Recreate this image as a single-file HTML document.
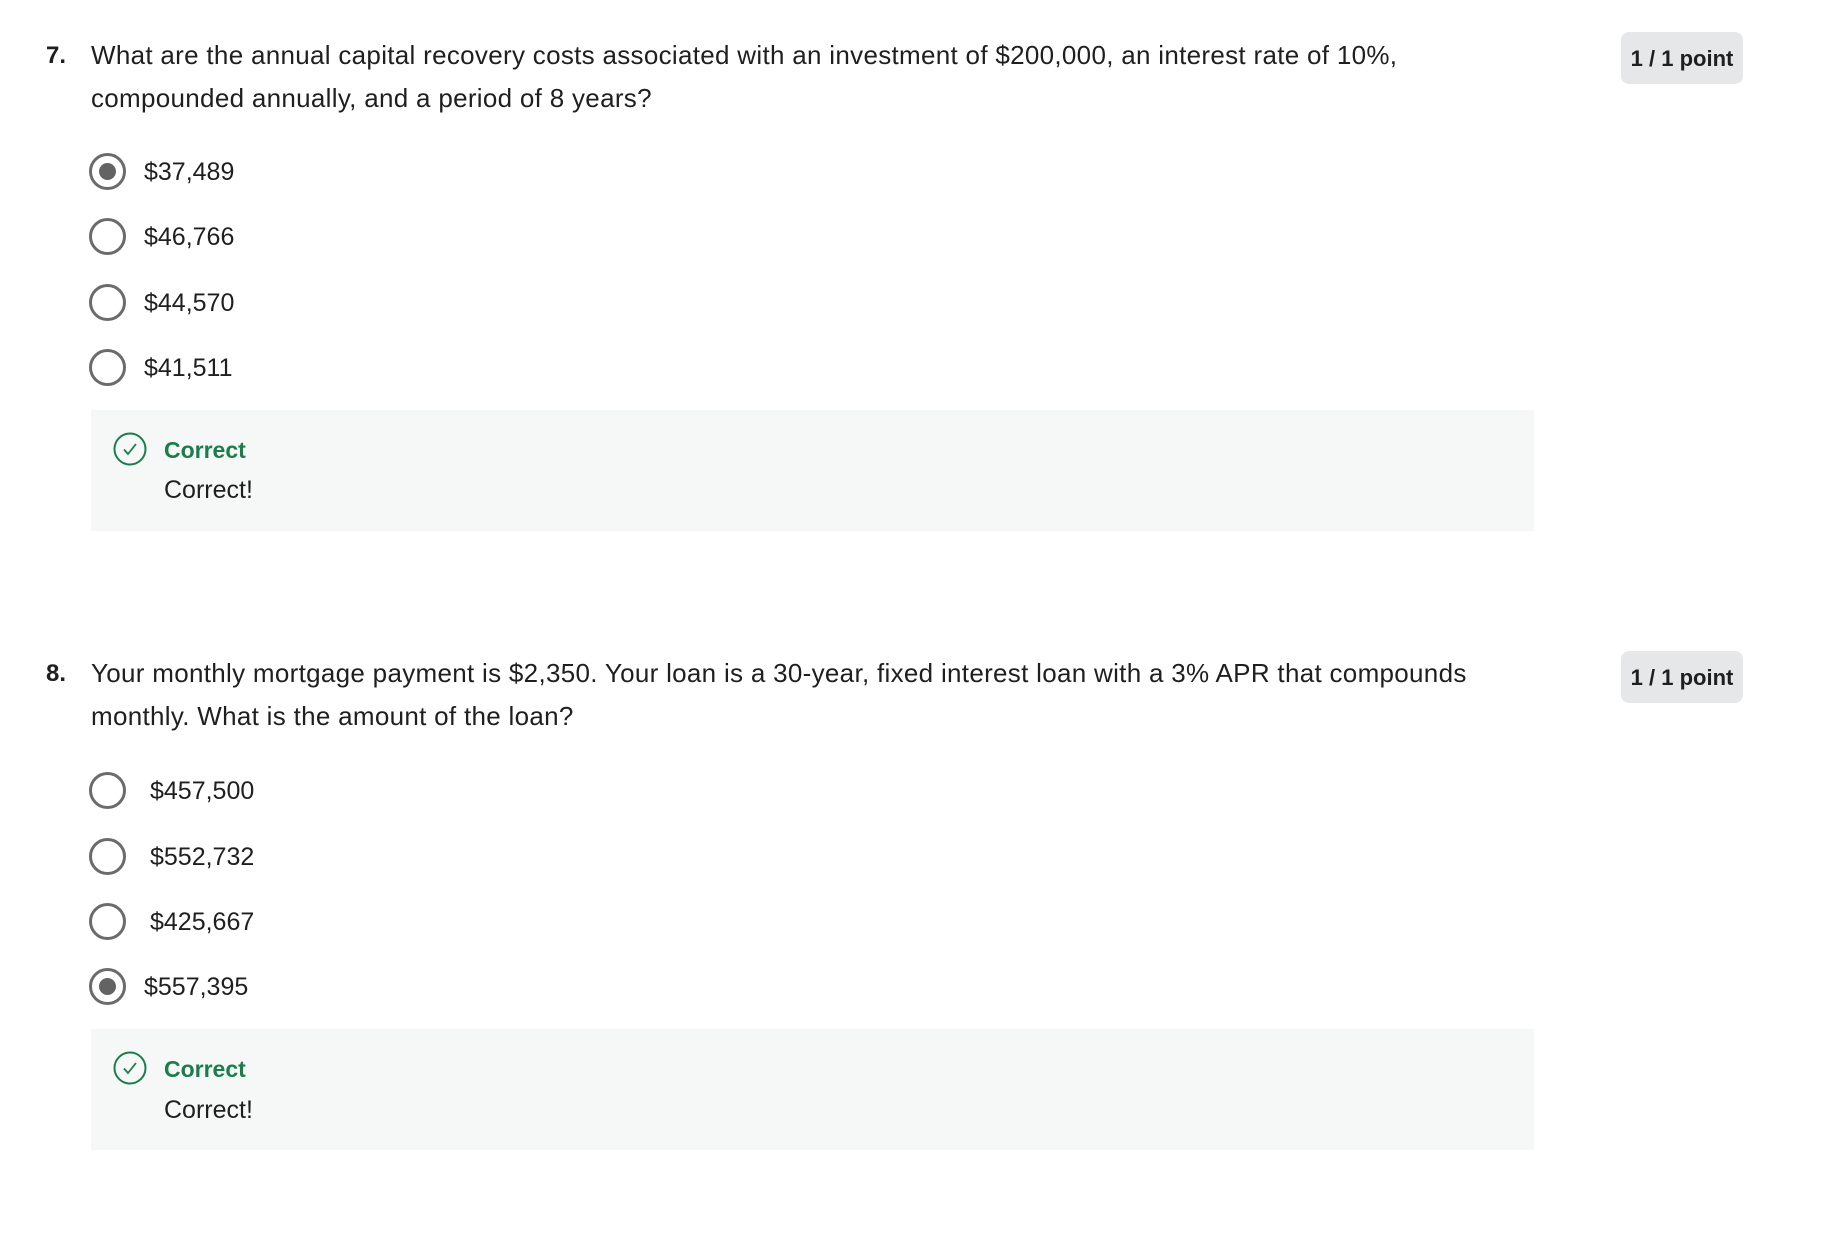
<!DOCTYPE html>
<html><head><meta charset="utf-8"><style>
body{margin:0;width:1821px;height:1238px;background:#fff;font-family:"Liberation Sans",sans-serif;color:#1f1f1f;position:relative;overflow:hidden}
.a{position:absolute;white-space:nowrap}
.q{font-size:26px;line-height:30px;letter-spacing:0.3px}
.num{font-weight:bold;font-size:24px}
.radio{position:absolute;width:31px;height:31px;border:3px solid #6b6b6b;border-radius:50%;box-sizing:content-box}
.radio.sel::after{content:"";position:absolute;left:7px;top:7px;width:17px;height:17px;border-radius:50%;background:#636363}
.opt{font-size:25px;line-height:30px}
.box{position:absolute;left:91px;width:1443px;height:121px;background:#f5f8f7}
.badge{position:absolute;left:1621px;width:122px;height:52px;background:#e6e7e9;border-radius:8px;font-weight:bold;font-size:22px;line-height:54px;text-align:center;color:#1f1f1f}
.cg{color:#1b7d4c;font-weight:bold;font-size:23px}
</style></head><body>
<div class="a num" style="left:46px;top:42px">7.</div>
<div class="a q" style="left:91px;top:40px">What are the annual capital recovery costs associated with an investment of $200,000, an interest rate of 10%,</div>
<div class="a q" style="left:91px;top:83px">compounded annually, and a period of 8 years?</div>
<div class="badge" style="top:32px">1 / 1 point</div>

<div class="radio sel" style="left:89px;top:153px"></div><div class="a opt" style="left:144px;top:157px">$37,489</div>
<div class="radio" style="left:89px;top:218px"></div><div class="a opt" style="left:144px;top:222px">$46,766</div>
<div class="radio" style="left:89px;top:284px"></div><div class="a opt" style="left:144px;top:288px">$44,570</div>
<div class="radio" style="left:89px;top:349px"></div><div class="a opt" style="left:144px;top:353px">$41,511</div>

<div class="box" style="top:410px"></div>
<svg class="a" style="left:113px;top:432px" width="34" height="34" viewBox="0 0 34 34"><circle cx="17" cy="17" r="15.5" fill="none" stroke="#1b7d4c" stroke-width="2"/><path d="M11 17.5l4 4.5 8-10" fill="none" stroke="#1b7d4c" stroke-width="1.8"/></svg>
<div class="a cg" style="left:164px;top:437px">Correct</div>
<div class="a opt" style="left:164px;top:475px">Correct!</div>

<div class="a num" style="left:46px;top:660px">8.</div>
<div class="a q" style="left:91px;top:658px">Your monthly mortgage payment is $2,350. Your loan is a 30-year, fixed interest loan with a 3% APR that compounds</div>
<div class="a q" style="left:91px;top:701px">monthly. What is the amount of the loan?</div>
<div class="badge" style="top:651px">1 / 1 point</div>

<div class="radio" style="left:89px;top:772px"></div><div class="a opt" style="left:150px;top:776px">$457,500</div>
<div class="radio" style="left:89px;top:838px"></div><div class="a opt" style="left:150px;top:842px">$552,732</div>
<div class="radio" style="left:89px;top:903px"></div><div class="a opt" style="left:150px;top:907px">$425,667</div>
<div class="radio sel" style="left:89px;top:968px"></div><div class="a opt" style="left:144px;top:972px">$557,395</div>

<div class="box" style="top:1029px"></div>
<svg class="a" style="left:113px;top:1051px" width="34" height="34" viewBox="0 0 34 34"><circle cx="17" cy="17" r="15.5" fill="none" stroke="#1b7d4c" stroke-width="2"/><path d="M11 17.5l4 4.5 8-10" fill="none" stroke="#1b7d4c" stroke-width="1.8"/></svg>
<div class="a cg" style="left:164px;top:1056px">Correct</div>
<div class="a opt" style="left:164px;top:1095px">Correct!</div>
</body></html>
